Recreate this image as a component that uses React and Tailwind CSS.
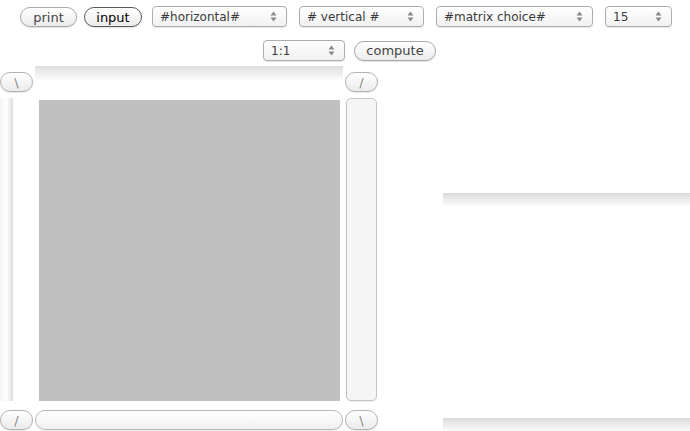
import React from 'react';

function PillButton({ label, active, className = '' }) {
    return (
        <button
            className={`h-[20px] rounded-full border bg-gradient-to-b from-white to-[#ececec] text-[13px] leading-none shadow-[0_1px_1px_rgba(0,0,0,0.12)] ${active ? 'border-[#5a5a5a] text-black' : 'border-[#a9a9a9] text-[#444]'} ${className}`}
        >
            {label}
        </button>
    );
}

function Arrows() {
    return (
        <svg width="7" height="11" viewBox="0 0 7 11" className="shrink-0">
            <path d="M3.5 0.5 L6.5 4.5 L0.5 4.5 Z" fill="#8a8a8a" />
            <path d="M3.5 10.5 L6.5 6.5 L0.5 6.5 Z" fill="#8a8a8a" />
        </svg>
    );
}

function Select({ label, className = '' }) {
    return (
        <div
            className={`flex h-[21px] items-center justify-between rounded-[4px] border border-[#acacac] bg-gradient-to-b from-white to-[#f1f1f1] pl-[7px] pr-[9px] text-[12px] text-[#3a3a3a] shadow-[0_1px_1px_rgba(0,0,0,0.1)] ${className}`}
        >
            <span className="leading-none">{label}</span>
            <Arrows />
        </div>
    );
}

function SlashButton({ glyph }) {
    return (
        <button className="flex h-[20px] w-[33px] items-center justify-center rounded-full border border-[#b3b3b3] bg-gradient-to-b from-white to-[#ebebeb] text-[13px] font-light leading-none text-[#444] shadow-[0_1px_1px_rgba(0,0,0,0.1)]">
            {glyph}
        </button>
    );
}

export default function App() {
    return (
        <div className="relative h-[431px] w-[690px] overflow-hidden bg-white font-['Lucida_Grande','DejaVu_Sans',sans-serif]">
            {/* top toolbar */}
            <div className="flex items-center pl-[20px] pt-[6px]">
                <PillButton label="print" className="mt-[1px] w-[57px]" />
                <PillButton label="input" active className="ml-[7px] mt-[1px] w-[58px]" />
                <Select label="#horizontal#" className="ml-[10px] w-[135px]" />
                <Select label="# vertical #" className="ml-[12px] w-[125px]" />
                <Select label="#matrix choice#" className="ml-[12px] w-[157px]" />
                <Select label="15" className="ml-[12px] w-[67px]" />
            </div>
            <div className="mt-[13px] flex items-center pl-[263px]">
                <Select label="1:1" className="w-[82px]" />
                <PillButton label="compute" className="ml-[9px] w-[82px]" />
            </div>

            <div className="mt-[5px] flex">
                {/* matrix panel */}
                <div className="grid w-[378px] grid-cols-[33px_308px_33px] grid-rows-[27px_303px_20px] gap-x-[2px]">
                    <div className="self-end pb-[1px]">
                        <SlashButton glyph="\" />
                    </div>
                    <div className="h-[15px] self-start bg-gradient-to-b from-[#dedede] to-white" />
                    <div className="self-end pb-[1px]">
                        <SlashButton glyph="/" />
                    </div>

                    <div className="mt-[5px] h-[303px] w-[13px] bg-gradient-to-r from-[#f4f4f4] via-white to-[#dcdcdc]" />
                    <div className="mt-[7px] pl-[4px]">
                        <div className="h-[301px] w-[301px] bg-[#c0c0c0]" />
                    </div>
                    <div className="mt-[5px] pl-[1px]">
                        <div className="h-[303px] w-[31px] rounded-[5px] border border-[#c4c4c4] bg-[#f5f5f5] shadow-[0_1px_1px_rgba(0,0,0,0.08)]" />
                    </div>

                    <div className="mt-[14px]">
                        <SlashButton glyph="/" />
                    </div>
                    <div className="mt-[14px] h-[20px] rounded-full border border-[#b8b8b8] bg-gradient-to-b from-white to-[#f0f0f0] shadow-[0_1px_1px_rgba(0,0,0,0.08)]" />
                    <div className="mt-[14px]">
                        <SlashButton glyph="\" />
                    </div>
                </div>

                {/* output panel */}
                <div className="ml-[65px] flex flex-1 flex-col">
                    <div className="mt-[127px] h-[14px] bg-gradient-to-b from-[#dadada] to-white" />
                    <div className="mt-[211px] h-[14px] bg-gradient-to-b from-[#dadada] to-white" />
                </div>
            </div>
        </div>
    );
}
